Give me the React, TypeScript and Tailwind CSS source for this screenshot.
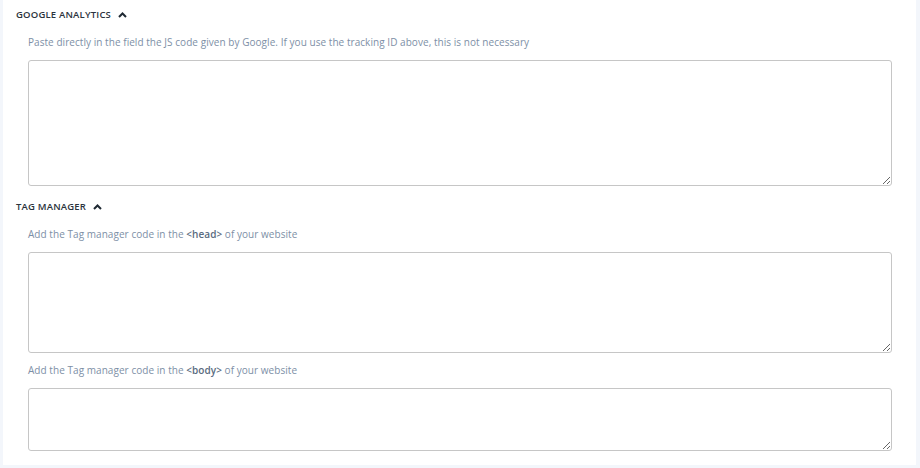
import React from 'react';

function Caret() {
  return (
    <svg width="9" height="6" viewBox="0 0 9 6" className="ml-[7px]">
      <polyline points="1,5 4.5,1.5 8,5" fill="none" stroke="#1f2933" strokeWidth="2" />
    </svg>
  );
}

function SectionTitle({ children }: { children: React.ReactNode }) {
  return (
    <div className="flex items-center h-[10px]">
      <span className="text-[9.5px] font-semibold tracking-[0.02em] uppercase text-[#2b333d] leading-[10px]">{children}</span>
      <Caret />
    </div>
  );
}

function Hint({ children }: { children: React.ReactNode }) {
  return <p className="pl-[12px] text-[10px] leading-[12px] tracking-[0.005em] text-[#7d8fa6]">{children}</p>;
}

function CodeField({ h }: { h: string }) {
  return (
    <div className="pl-[12px]">
      <textarea className={`block w-[864px] ${h} border border-[#c6c6c6] rounded-[3px] bg-white outline-none`} />
    </div>
  );
}

export default function App() {
  return (
    <div className="w-[920px] h-[468px] bg-[#f3f6fb] pl-[3px] pr-[4px] pb-[3px]" style={{ fontFamily: '"Open Sans", "Noto Sans", sans-serif' }}>
      <div className="bg-white h-full pl-[13px] pt-[10px]">
        <SectionTitle>Google Analytics</SectionTitle>
        <div className="mt-[16px]">
          <Hint>Paste directly in the field the JS code given by Google. If you use the tracking ID above, this is not necessary</Hint>
        </div>
        <div className="mt-[12px]">
          <CodeField h="h-[126px]" />
        </div>

        <div className="mt-[16px]">
          <SectionTitle>Tag manager</SectionTitle>
        </div>
        <div className="mt-[16px]">
          <Hint>
            Add the Tag manager code in the <span className="font-semibold text-[#5a6b80]">&lt;head&gt;</span> of your website
          </Hint>
        </div>
        <div className="mt-[12px]">
          <CodeField h="h-[101px]" />
        </div>
        <div className="mt-[11px]">
          <Hint>
            Add the Tag manager code in the <span className="font-semibold text-[#5a6b80]">&lt;body&gt;</span> of your website
          </Hint>
        </div>
        <div className="mt-[12px]">
          <CodeField h="h-[63px]" />
        </div>
      </div>
    </div>
  );
}
